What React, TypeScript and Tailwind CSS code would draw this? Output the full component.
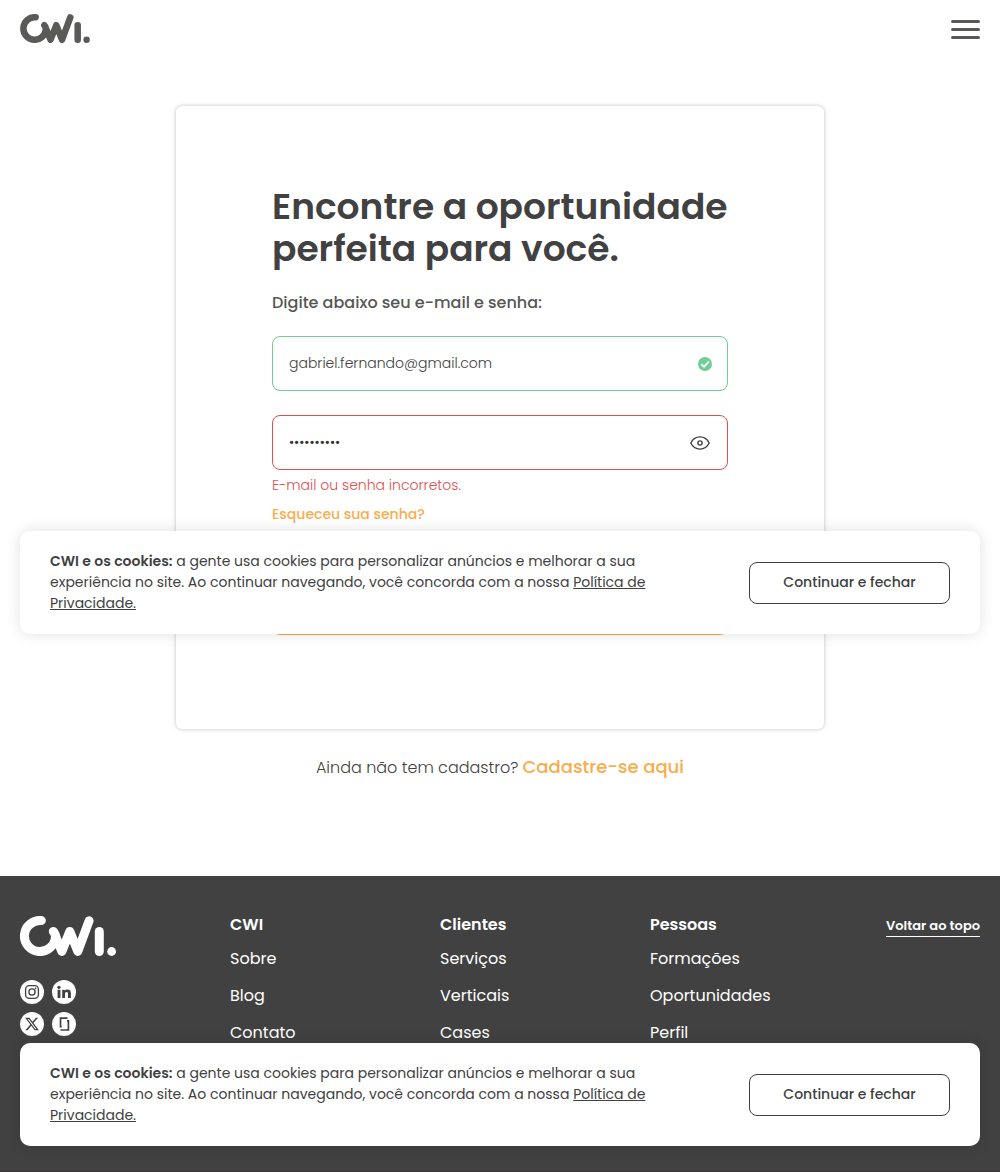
import type { ReactNode } from 'react';

function Logo({ className }: { className: string }) {
  return (
    <svg viewBox="0 0 96 40" className={className} fill="none" stroke="currentColor" strokeWidth="9" strokeLinecap="round" strokeLinejoin="round">
      <path d="M21.300 4.600A15.500 15.500 0 1 0 35.400 21" />
      <path d="M33.300 15.500C34.800 16.800 35.300 19 36.600 22.800L41.900 35.400L49.800 15.500L57.800 35.400L69.100 4.800" />
      <path d="M79.300 15.500V35.500" />
      <circle cx="91.600" cy="35.500" r="4.400" fill="currentColor" stroke="none" />
    </svg>
  );
}

function SocialBadge({ label, children }: { label: string; children: ReactNode }) {
  return (
    <a aria-label={label} className="block size-6">
      <svg viewBox="0 0 24 24" className="size-6">
        <circle cx="12" cy="12" r="12" fill="#fff" />
        {children}
      </svg>
    </a>
  );
}

function CookieBanner() {
  return (
    <div className="flex h-[103px] items-center justify-between rounded-[10px] bg-white px-[30px] text-sm leading-[21px] text-[#414141] shadow-[0_0_15px_rgba(0,0,0,0.12)]">
      <p className="w-[610px]">
        <strong className="font-semibold">CWI e os cookies:</strong> a gente usa cookies para personalizar anúncios e melhorar a sua experiência no site. Ao continuar navegando, você concorda com a nossa{' '}
        <a className="underline">Política de Privacidade.</a>
      </p>
      <button className="h-[42px] w-[201px] rounded-lg border border-[#414141] font-medium">Continuar e fechar</button>
    </div>
  );
}

function Header() {
  return (
    <header className="flex h-[58px] items-center justify-between px-5">
      <Logo className="mb-px h-[29px] w-[70px] text-[#5a5a59]" />
      <button aria-label="Menu" className="flex flex-col gap-[5px] pt-px">
        <span className="h-[3px] w-[29px] rounded-full bg-[#575756]" />
        <span className="h-[3px] w-[29px] rounded-full bg-[#575756]" />
        <span className="h-[3px] w-[29px] rounded-full bg-[#575756]" />
      </button>
    </header>
  );
}

function LoginCard() {
  return (
    <section className="mx-auto mt-12 h-[623px] w-[648px] rounded-md bg-white px-24 pt-[80px] shadow-[0_0_4px_rgba(0,0,0,0.25)]">
      <h1 className="text-4xl leading-[42px] font-semibold text-[#414141]">Encontre a oportunidade perfeita para você.</h1>
      <p className="mt-[21px] text-base font-medium text-[#575756]">Digite abaixo seu e-mail e senha:</p>
      <div className="mt-[21px] flex h-[55px] items-center justify-between rounded-lg border border-[#6fcf97] pr-[15px] pl-4">
        <span className="pb-0.5 text-sm font-light text-[#414141]">gabriel.fernando@gmail.com</span>
        <svg viewBox="0 0 14 14" className="size-3.5">
          <circle cx="7" cy="7" r="7" fill="#6fcf97" />
          <path d="M3.200 7.200L6 9.700L10.900 4.600" fill="none" stroke="#fff" strokeWidth="1.900" />
        </svg>
      </div>
      <div className="mt-6 flex h-[55px] items-center justify-between rounded-lg border border-[#e04f4f] pr-[17px] pl-4">
        <span aria-label="Senha" className="pb-0.5 text-sm font-light text-[#333]">
          ••••••••••
        </span>
        <svg viewBox="0 0 20 14" className="h-3.5 w-5" fill="none" stroke="#414141" strokeWidth="1.400">
          <path d="M.8 7C2.600 3.400 5.800.9 10 .9S17.400 3.400 19.200 7C17.400 10.600 14.200 13.100 10 13.100S2.600 10.600.8 7Z" strokeLinejoin="round" />
          <circle cx="10" cy="7" r="2.100" />
        </svg>
      </div>
      <p className="mt-[5px] text-sm font-light text-[#e04f4f]">E-mail ou senha incorretos.</p>
      <a className="mt-[9px] block text-sm font-medium text-[#faad4b]">Esqueceu sua senha?</a>
      <div className="mt-[55px] h-14 rounded-lg bg-[#f5a83c]" />
    </section>
  );
}

function FooterColumn({ title, links }: { title: string; links: string[] }) {
  return (
    <nav className="flex w-[210px] flex-col pt-px leading-6">
      <strong className="font-semibold">{title}</strong>
      <div className="mt-2.5 flex flex-col gap-[13px]">
        {links.map((item) => (
          <a key={item}>{item}</a>
        ))}
      </div>
    </nav>
  );
}

function Footer() {
  return (
    <footer className="flex h-[296px] justify-between border-b border-[#3a3536] bg-[#414141] px-5 pt-9 text-base text-white">
      <div className="flex">
        <div className="w-[210px] pt-1">
          <Logo className="h-10 w-24" />
          <div className="mt-6 grid w-14 grid-cols-2 gap-2">
            <SocialBadge label="Instagram">
              <g fill="none" stroke="#414141" strokeWidth="1.300">
                <rect x="5.600" y="5.600" width="12.800" height="12.800" rx="3.600" />
                <circle cx="12" cy="12" r="3.100" />
              </g>
              <circle cx="15.600" cy="8.400" r=".8" fill="#414141" />
            </SocialBadge>
            <SocialBadge label="LinkedIn">
              <g fill="#414141">
                <circle cx="7" cy="7.300" r="1.600" />
                <path d="M5.600 9.800H8.400V18H5.600ZM10.200 9.800H12.900V10.900C13.400 10.100 14.300 9.600 15.500 9.600C17.900 9.600 18.900 11 18.900 13.300V18H16V13.800C16 12.700 15.700 12 14.600 12C13.500 12 13 12.800 13 13.900V18H10.200Z" />
              </g>
            </SocialBadge>
            <SocialBadge label="X">
              <path
                transform="translate(4.300 4.300) scale(.64)"
                fill="#414141"
                d="M18.244 2.250h3.308l-7.227 8.260 8.502 11.240H16.170l-5.214-6.817L4.990 21.750H1.680l7.730-8.835L1.254 2.250H8.080l4.713 6.231zm-1.161 17.520h1.833L7.084 4.126H5.117z"
              />
            </SocialBadge>
            <SocialBadge label="Glassdoor">
              <path d="M8.500 15.300V6.200H15.500M8.500 18H16.400V8.600M7.700 14.700H9.800M15 8.900H17.200" fill="none" stroke="#414141" strokeWidth="1.700" />
            </SocialBadge>
          </div>
        </div>
        <FooterColumn title="CWI" links={['Sobre', 'Blog', 'Contato']} />
        <FooterColumn title="Clientes" links={['Serviços', 'Verticais', 'Cases']} />
        <FooterColumn title="Pessoas" links={['Formações', 'Oportunidades', 'Perfil']} />
      </div>
      <a className="mt-1 h-[21px] border-b border-white text-[13px] leading-5 font-semibold">Voltar ao topo</a>
    </footer>
  );
}

export default function App() {
  return (
    <div className="relative flex h-[1172px] w-[1000px] flex-col overflow-hidden bg-white font-['Poppins','Inter',sans-serif]">
      <Header />
      <main className="flex-1">
        <LoginCard />
        <p className="mt-6 flex items-baseline justify-center gap-1 leading-7">
          <span className="text-base font-light text-[#414141]">Ainda não tem cadastro?</span>
          <a className="text-lg leading-7 font-medium text-[#faad4b]">Cadastre-se aqui</a>
        </p>
      </main>
      <Footer />
      <div className="absolute inset-x-5 top-[531px]">
        <CookieBanner />
      </div>
      <div className="absolute inset-x-5 bottom-[26px]">
        <CookieBanner />
      </div>
    </div>
  );
}
